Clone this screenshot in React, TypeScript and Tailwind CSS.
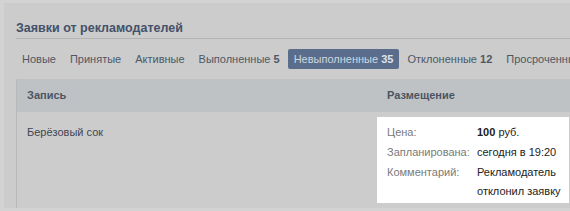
import React from "react";

const font = { fontFamily: '"Liberation Sans", Arial, sans-serif' };

function Tab({ label, count, active }: { label: string; count?: string; active?: boolean }) {
  return (
    <div
      className={
        "h-[20px] px-[6px] leading-[20px] rounded-[2px] whitespace-nowrap " +
        (active ? "bg-[#5a6d8d] text-[#cfd6df]" : "text-[#4d5866]")
      }
    >
      {label}
      {count ? (
        <span className={"font-bold " + (active ? "text-[#dfe4ea]" : "text-[#4d5866]")}> {count}</span>
      ) : null}
    </div>
  );
}

export default function App() {
  return (
    <div className="w-[570px] h-[211px] bg-[#d3d3d3] overflow-hidden text-[11px]" style={font}>
      <div className="ml-[4px] mt-[3px] h-[205px] bg-[#cccccc] pl-[12px] overflow-hidden">
        <div className="pt-[16px] border-b border-[#b4b4b4]">
          <div className="h-[19px] leading-[19px] text-[12.5px] font-bold text-[#44516a]">
            Заявки от рекламодателей
          </div>
        </div>
        <div className="mt-[10px] flex gap-[2px]">
          <Tab label="Новые" />
          <Tab label="Принятые" />
          <Tab label="Активные" />
          <Tab label="Выполненные" count="5" />
          <Tab label="Невыполненные" count="35" active />
          <Tab label="Отклоненные" count="12" />
          <Tab label="Просроченные" />
        </div>
        <div className="mt-[10px] border-l border-[#b9b9b9]">
          <div className="h-[33px] bg-[#bfc2c5] flex items-center font-bold text-[#4b5461]">
            <div className="w-[360px] pl-[10px]">Запись</div>
            <div className="pl-[10px]">Размещение</div>
          </div>
          <div className="flex h-[96px]">
            <div className="w-[360px] pl-[10px] pt-[10px] leading-[20px] text-[#3f4753]">Берёзовый сок</div>
            <div className="mt-[5px] w-[192px] h-[86px] bg-white pl-[10px] pt-[5px] leading-[20px] whitespace-nowrap">
              <div className="flex">
                <div className="w-[90px] text-[#7a7a7a]">Цена:</div>
                <div className="text-[#222222]">
                  <span className="font-bold">100</span> руб.
                </div>
              </div>
              <div className="flex">
                <div className="w-[90px] text-[#7a7a7a]">Запланирована:</div>
                <div className="text-[#222222]">сегодня в 19:20</div>
              </div>
              <div className="flex">
                <div className="w-[90px] text-[#7a7a7a]">Комментарий:</div>
                <div className="text-[#222222] leading-[19px] pt-[1px]">
                  Рекламодатель
                  <br />
                  отклонил заявку
                </div>
              </div>
            </div>
          </div>
        </div>
      </div>
    </div>
  );
}
